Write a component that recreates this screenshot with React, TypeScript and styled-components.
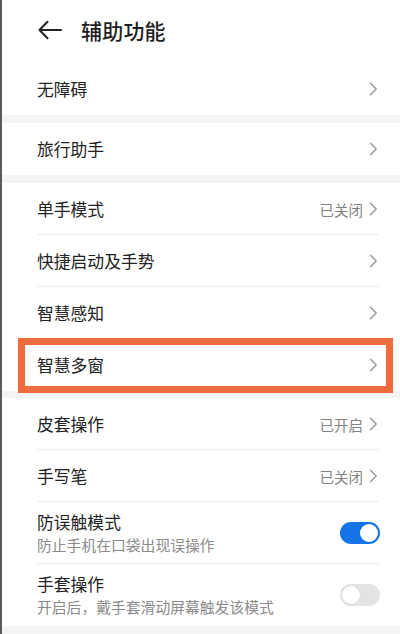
import React from "react";
import styled, { createGlobalStyle } from "styled-components";

const Global = createGlobalStyle`
  html, body { margin: 0; padding: 0; background: #ffffff; }
  body { font-family: "Noto Sans CJK SC", "Noto Sans", sans-serif; }
  * { box-sizing: border-box; }
`;

const Page = styled.div`
  width: 400px;
  height: 634px;
  overflow: hidden;
  background: #f4f4f4;
  border-left: 2px solid #5a5a5a;
  display: flex;
  flex-direction: column;
`;

const Header = styled.div`
  height: 65px;
  background: #fff;
  display: flex;
  align-items: center;
  padding: 0 0 0 35px;
  gap: 18px;
  padding-bottom: 3px;
`;

const Title = styled.h1`
  margin: 0;
  font-size: 21px;
  font-weight: 500;
  color: #1e1e1e;
  letter-spacing: 0.2px;
`;

const Section = styled.div<{ $gap?: number }>`
  background: #fff;
  margin-bottom: ${(p) => p.$gap ?? 8}px;
  display: flex;
  flex-direction: column;
`;

const Row = styled.div<{ $tall?: boolean; $divider?: boolean }>`
  position: relative;
  height: ${(p) => (p.$tall ? 62 : 52)}px;
  display: flex;
  align-items: center;
  padding: 0 22px 0 35px;
  &::after {
    content: "";
    display: ${(p) => (p.$divider ? "block" : "none")};
    position: absolute;
    left: 35px;
    right: 21px;
    bottom: 0;
    height: 1px;
    background: #ececec;
  }
`;

const Texts = styled.div`
  flex: 1;
  display: flex;
  flex-direction: column;
  gap: 3px;
`;

const Label = styled.div`
  font-size: 16.8px;
  color: #222;
  line-height: 20px;
`;

const Sub = styled.div`
  font-size: 14.8px;
  color: #8a8a8a;
  line-height: 19px;
`;

const Value = styled.span`
  font-size: 14.5px;
  color: #828282;
  margin-right: 6px;
`;

const Highlight = styled.div`
  position: absolute;
  top: -1px;
  bottom: -2px;
  left: 16px;
  right: 7px;
  border: 7.5px solid #ef6b3b;
  pointer-events: none;
`;

const Toggle = styled.div<{ $on?: boolean }>`
  width: 40px;
  height: 22px;
  border-radius: 11px;
  background: ${(p) => (p.$on ? "#1574e6" : "#e3e3e3")};
  display: flex;
  align-items: center;
  justify-content: ${(p) => (p.$on ? "flex-end" : "flex-start")};
  padding: 2px;
  margin-right: -2px;
`;

const Knob = styled.div<{ $on?: boolean }>`
  width: 18px;
  height: 18px;
  border-radius: 50%;
  background: #fff;
  box-shadow: ${(p) => (p.$on ? "none" : "0 0 0 0.5px #d6d6d6")};
`;

const Chevron = () => (
  <svg width="9" height="14" viewBox="0 0 9 14" style={{ flexShrink: 0 }}>
    <path d="M1.5 1.2 L7.2 7 L1.5 12.8" fill="none" stroke="#9a9a9a" strokeWidth="1.5" strokeLinecap="round" strokeLinejoin="round" />
  </svg>
);

const BackArrow = () => (
  <svg width="26" height="20" viewBox="0 0 26 20">
    <path d="M2.5 10 H24 M10.5 1.8 L2.5 10 L10.5 18.2" fill="none" stroke="#222" strokeWidth="2" strokeLinecap="round" strokeLinejoin="round" />
  </svg>
);

type Item = { label: string; value?: string; highlight?: boolean };

const NavRow = ({ item, divider }: { item: Item; divider?: boolean }) => (
  <Row $divider={divider}>
    <Texts>
      <Label>{item.label}</Label>
    </Texts>
    {item.value && <Value>{item.value}</Value>}
    <Chevron />
    {item.highlight && <Highlight />}
  </Row>
);

const section3: Item[] = [
  { label: "单手模式", value: "已关闭" },
  { label: "快捷启动及手势" },
  { label: "智慧感知" },
  { label: "智慧多窗", highlight: true },
];

const section4: Item[] = [
  { label: "皮套操作", value: "已开启" },
  { label: "手写笔", value: "已关闭" },
];

export default function App() {
  return (
    <>
      <Global />
      <Page>
        <Header>
          <BackArrow />
          <Title>辅助功能</Title>
        </Header>
        <Section>
          <Row>
            <Texts>
              <Label>无障碍</Label>
            </Texts>
            <Chevron />
          </Row>
        </Section>
        <Section>
          <Row>
            <Texts>
              <Label>旅行助手</Label>
            </Texts>
            <Chevron />
          </Row>
        </Section>
        <Section $gap={7}>
          {section3.map((it, i) => (
            <NavRow key={it.label} item={it} divider={i < 2} />
          ))}
        </Section>
        <Section>
          {section4.map((it) => (
            <NavRow key={it.label} item={it} divider />
          ))}
          <Row $tall $divider>
            <Texts>
              <Label>防误触模式</Label>
              <Sub>防止手机在口袋出现误操作</Sub>
            </Texts>
            <Toggle $on>
              <Knob $on />
            </Toggle>
          </Row>
          <Row $tall>
            <Texts>
              <Label>手套操作</Label>
              <Sub>开启后，戴手套滑动屏幕触发该模式</Sub>
            </Texts>
            <Toggle>
              <Knob />
            </Toggle>
          </Row>
        </Section>
      </Page>
    </>
  );
}
